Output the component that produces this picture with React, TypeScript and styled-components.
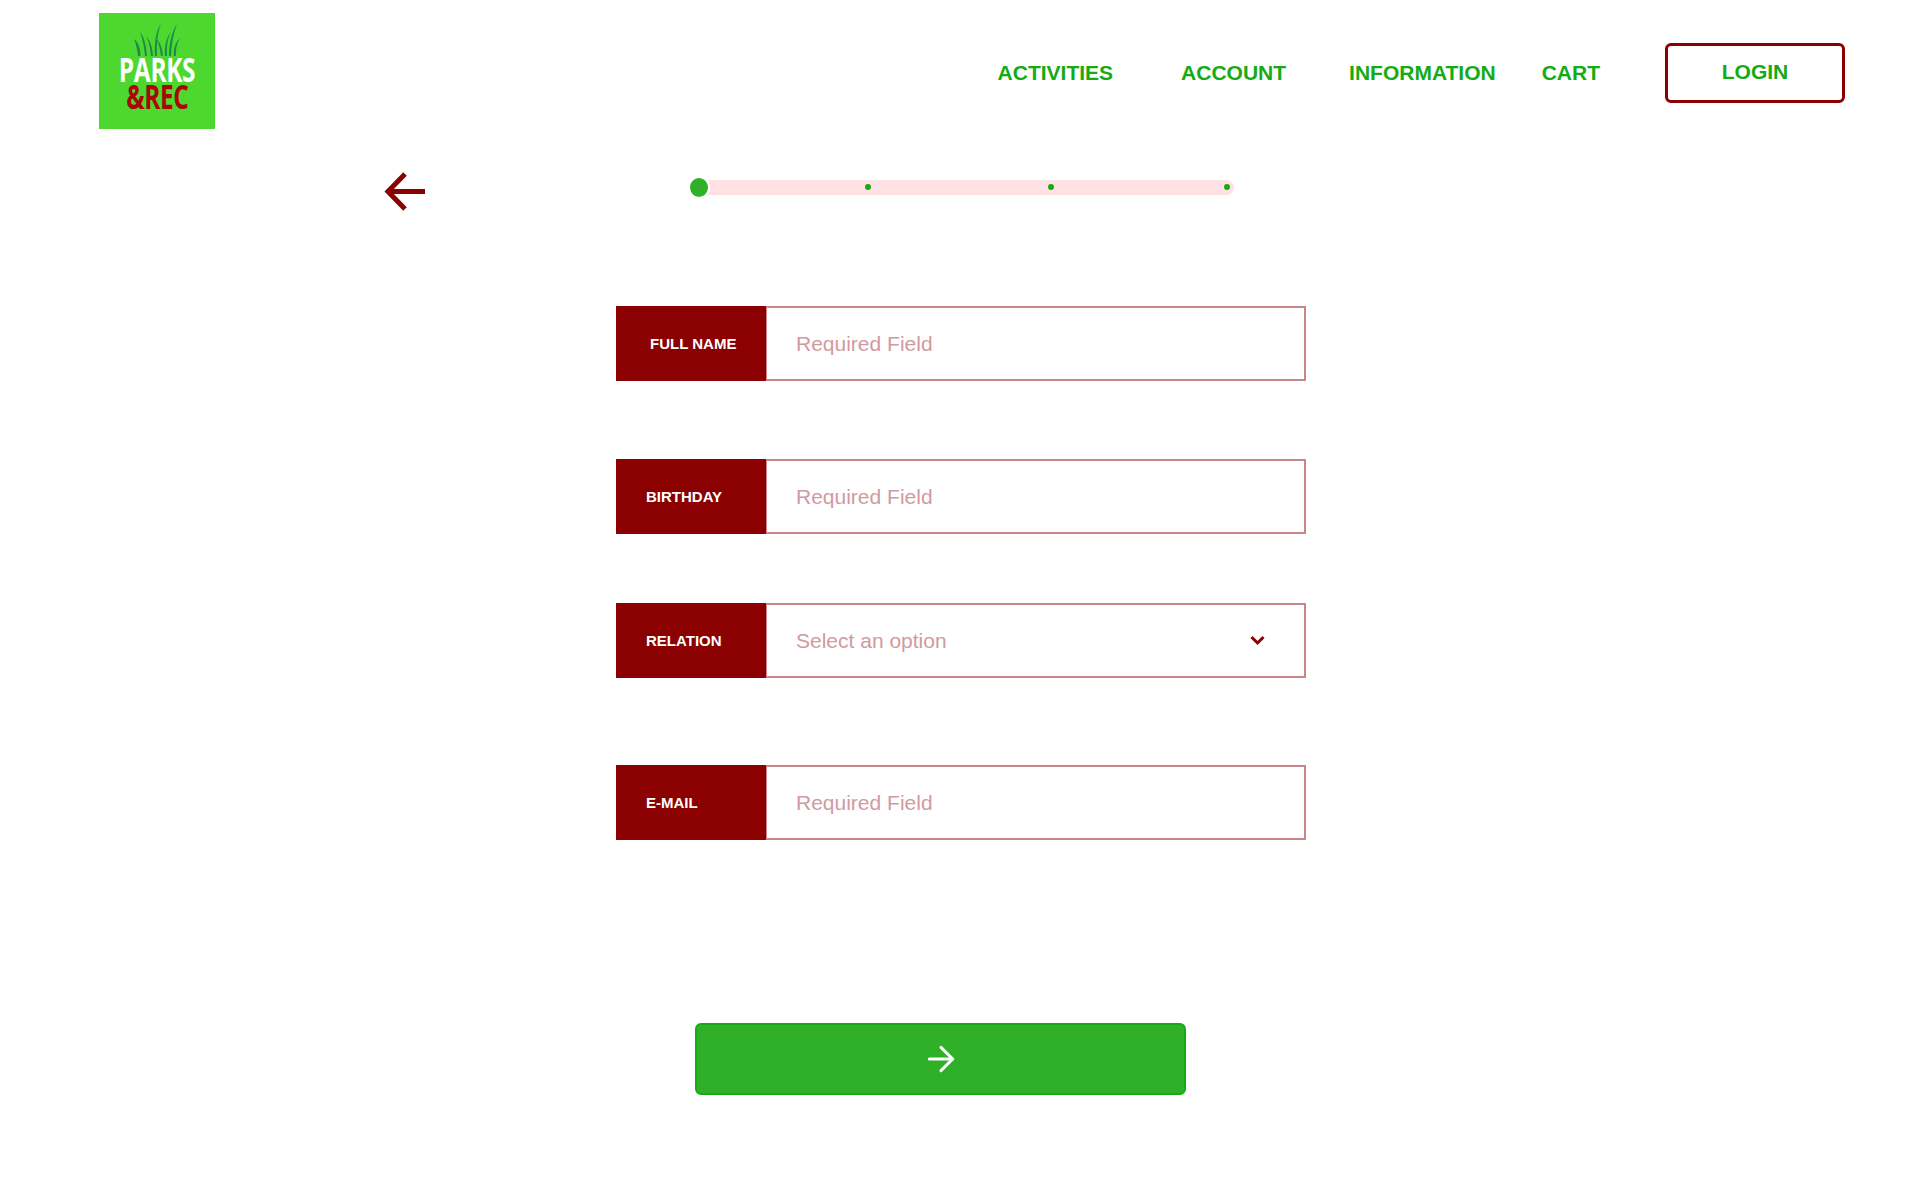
import React from 'react'
import styled, { createGlobalStyle } from 'styled-components'
import { ArrowRight } from 'lucide-react'

const GlobalStyle = createGlobalStyle`
    html, body {
        margin: 0;
        padding: 0;
        background: #ffffff;
        font-family: "Liberation Sans", Arial, sans-serif;
    }
    * {
        box-sizing: border-box;
    }
`

const Page = styled.div`
    width: 1920px;
    min-height: 1199px;
    background: #ffffff;
    overflow: hidden;
`

const Header = styled.header`
    display: flex;
    justify-content: space-between;
    align-items: flex-start;
    padding: 13px 75px 0 99px;
`

const Logo = styled.div`
    width: 116px;
    height: 116px;
    background: #4cd82e;
    display: flex;
    flex-direction: column;
    align-items: center;
    padding-top: 10px;
    font-family: "Open Sans", sans-serif;
    font-weight: 700;
`

const LogoWord = styled.span<{ $red?: boolean }>`
    display: block;
    font-size: 34px;
    line-height: 27px;
    letter-spacing: -0.5px;
    color: ${props => (props.$red ? '#ab0505' : '#ffffff')};
    transform: scaleX(0.72);
`

const Nav = styled.nav`
    display: flex;
    align-items: center;
    height: 60px;
    margin-top: 30px;
`

const NavLink = styled.a<{ $gap: number }>`
    margin-left: ${props => props.$gap}px;
    font-size: 21px;
    font-weight: 700;
    color: #14ab14;
    text-decoration: none;
    white-space: nowrap;
`

const LoginButton = styled.button`
    width: 180px;
    height: 60px;
    margin-left: 65px;
    padding: 0 0 2px;
    background: #ffffff;
    border: 3px solid #8b0000;
    border-radius: 6px;
    font-family: inherit;
    font-size: 21px;
    font-weight: 700;
    color: #14ab14;
`

const StepRow = styled.div`
    display: flex;
    align-items: flex-start;
    margin-top: 43px;
    padding-left: 384px;
`

const BackArrow = styled.svg`
    display: block;
    width: 41px;
    height: 39px;
`

const Track = styled.div`
    position: relative;
    width: 539px;
    height: 15px;
    margin: 8px 0 0 270px;
    background: #ffe0e3;
    border-radius: 8px;
`

const StartDot = styled.span`
    position: absolute;
    left: -7px;
    top: -4px;
    width: 22px;
    height: 23px;
    background: #30b028;
    border: 2px solid #ffffff;
    border-radius: 50%;
`

const StepDot = styled.span<{ $left: number }>`
    position: absolute;
    left: ${props => props.$left}px;
    top: 4px;
    width: 6px;
    height: 6px;
    background: #14ab14;
    border-radius: 50%;
`

const Form = styled.form`
    display: flex;
    flex-direction: column;
    padding-left: 616px;
`

const Field = styled.div<{ $gap: number }>`
    display: flex;
    width: 690px;
    height: 75px;
    margin-top: ${props => props.$gap}px;
`

const FieldLabel = styled.label<{ $indent: number }>`
    display: flex;
    align-items: center;
    flex: 0 0 150px;
    padding-left: ${props => props.$indent}px;
    background: #8b0000;
    color: #ffffff;
    font-size: 15px;
    font-weight: 700;
`

const FieldInput = styled.input`
    flex: 1;
    min-width: 0;
    padding: 0 29px;
    background: #ffffff;
    border: 2px solid #c9858c;
    border-left-width: 1px;
    border-radius: 0;
    outline: none;
    font-family: inherit;
    font-size: 21px;

    &::placeholder {
        color: #d19a9f;
        opacity: 1;
    }
`

const FieldSelect = styled.div`
    flex: 1;
    display: flex;
    align-items: center;
    justify-content: space-between;
    padding: 0 39px 0 29px;
    border: 2px solid #c9858c;
    border-left-width: 1px;
    font-size: 21px;
    color: #d19a9f;
`

const Chevron = styled.svg`
    display: block;
    width: 15px;
    height: 11px;
`

const NextButton = styled.button`
    display: flex;
    align-items: center;
    justify-content: center;
    width: 491px;
    height: 72px;
    margin: 183px 0 0 695px;
    padding: 0;
    background: #30b028;
    border: 2px solid #14ab14;
    border-radius: 6px;
    color: #ffffff;
`

const GRASS_BLADES = [
    'M4 33 C3 25 2 21 0 16 C5 20 6.5 26 6.5 33 Z',
    'M11 33 C10 22 8 14 6 9 C10.5 14 12.5 24 13 33 Z',
    'M17 33 C16 24 15 18 12 14 C16.5 17 18.5 25 19 33 Z',
    'M21 33 C20 20 22 8 27 0 C23.5 9 22.5 22 23 33 Z',
    'M27 33 C26 26 25 20 22 16 C26.5 19 28.5 26 29 33 Z',
    'M31 33 C30 22 33 14 37 9 C33.5 15 32.5 24 33 33 Z',
    'M35 33 C35 20 38 8 43 1 C39.5 10 37.5 22 37 33 Z',
    'M40 33 C39 26 41 20 46 15 C42.5 21 41.5 27 42 33 Z',
]

const App = () => {
    return (
        <Page>
            <GlobalStyle />
            <Header>
                <Logo>
                    <svg width="46" height="33" viewBox="0 0 46 33" fill="#1e8a4a" aria-hidden="true">
                        {GRASS_BLADES.map(d => <path key={d} d={d} />)}
                    </svg>
                    <LogoWord>PARKS</LogoWord>
                    <LogoWord $red>&amp;REC</LogoWord>
                </Logo>
                <Nav>
                    <NavLink $gap={0}>ACTIVITIES</NavLink>
                    <NavLink $gap={68}>ACCOUNT</NavLink>
                    <NavLink $gap={63}>INFORMATION</NavLink>
                    <NavLink $gap={46}>CART</NavLink>
                    <LoginButton>LOGIN</LoginButton>
                </Nav>
            </Header>
            <StepRow>
                <BackArrow viewBox="0 0 41 39" fill="none" stroke="#8b0000" strokeWidth="5" aria-hidden="true">
                    <path d="M21 2 L4 19.5 L21 37" />
                    <path d="M4 19.5 H41" />
                </BackArrow>
                <Track>
                    <StartDot />
                    <StepDot $left={170} />
                    <StepDot $left={353} />
                    <StepDot $left={529} />
                </Track>
            </StepRow>
            <Form>
                <Field $gap={95}>
                    <FieldLabel $indent={34}>FULL NAME</FieldLabel>
                    <FieldInput placeholder="Required Field" />
                </Field>
                <Field $gap={78}>
                    <FieldLabel $indent={30}>BIRTHDAY</FieldLabel>
                    <FieldInput placeholder="Required Field" />
                </Field>
                <Field $gap={69}>
                    <FieldLabel $indent={30}>RELATION</FieldLabel>
                    <FieldSelect>
                        Select an option
                        <Chevron viewBox="0 0 15 11" fill="none" stroke="#8b0000" strokeWidth="3" aria-hidden="true">
                            <path d="M1.5 2 L7.5 8 L13.5 2" />
                        </Chevron>
                    </FieldSelect>
                </Field>
                <Field $gap={87}>
                    <FieldLabel $indent={30}>E-MAIL</FieldLabel>
                    <FieldInput placeholder="Required Field" />
                </Field>
            </Form>
            <NextButton type="button">
                <ArrowRight size={40} strokeWidth={1.8} />
            </NextButton>
        </Page>
    )
}

export default App
